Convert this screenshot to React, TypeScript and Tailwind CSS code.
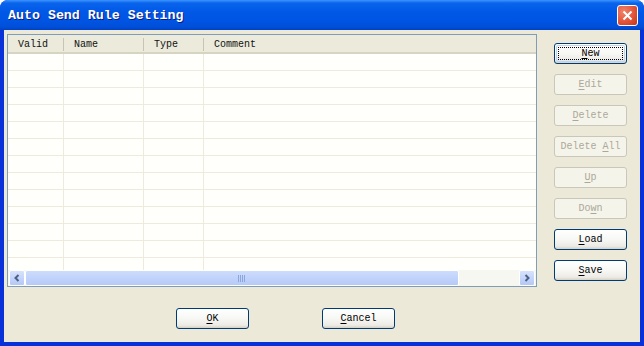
import type { ReactNode } from "react";

const mono = "font-['Liberation_Mono','DejaVu_Sans_Mono',monospace]";

function Btn({
  label,
  u,
  disabled = false,
  focused = false,
}: {
  label: string;
  u: number;
  disabled?: boolean;
  focused?: boolean;
}) {
  const text: ReactNode = (
    <>
      {label.slice(0, u)}
      <span className="underline underline-offset-2">{label[u]}</span>
      {label.slice(u + 1)}
    </>
  );
  return (
    <div
      className={[
        "relative flex h-[21px] w-[73px] items-center justify-center rounded-[3px] border text-[10px] leading-none",
        mono,
        disabled
          ? "border-[#c9c7ba] bg-[#f5f4ea] text-[#aca899]"
          : "border-[#003c74] bg-[linear-gradient(180deg,#ffffff_0%,#f7f7f4_50%,#ecebe6_85%,#d6d0c5_100%)] text-black",
      ].join(" ")}
    >
      {focused && (
        <span className="pointer-events-none absolute inset-[1px] rounded-[2px] border border-[#bcd4f6]">
          <span className="absolute inset-[1px] border border-dotted border-black" />
        </span>
      )}
      <span className="relative">{text}</span>
    </div>
  );
}

function ScrollArrow({ dir }: { dir: "left" | "right" }) {
  return (
    <div className="flex h-[16px] w-[16px] shrink-0 items-center justify-center rounded-[2px] border border-white bg-[linear-gradient(180deg,#d7e3fc_0%,#c1d3fb_60%,#b4c8f6_100%)]">
      <svg width="8" height="8" viewBox="0 0 8 8">
        <path
          d={dir === "left" ? "M5.5 1 L2.5 4 L5.5 7" : "M2.5 1 L5.5 4 L2.5 7"}
          fill="none"
          stroke="#4d6185"
          strokeWidth="2"
        />
      </svg>
    </div>
  );
}

const cols = [
  { name: "Valid", w: "w-[56px]" },
  { name: "Name", w: "w-[80px]" },
  { name: "Type", w: "w-[60px]" },
  { name: "Comment", w: "flex-1" },
];

export default function App() {
  const rows = Array.from({ length: 13 });
  return (
    <div className="flex h-[346px] w-[644px] flex-col overflow-hidden rounded-t-[8px] bg-[#0831d9]">
      {/* title bar */}
      <div className="flex h-[30px] shrink-0 items-center justify-between bg-[linear-gradient(180deg,#3d95ff_0%,#0a64ec_10%,#0058e6_40%,#0054e3_70%,#004fd8_90%,#0041c3_100%)] pl-[8px] pr-[6px]">
        <span
          className={`${mono} pt-[2px] text-[13.3px] font-bold text-white [text-shadow:1px_1px_0_#0a1e80]`}
        >
          Auto Send Rule Setting
        </span>
        <div className="flex h-[21px] w-[21px] items-center justify-center rounded-[3px] border border-white bg-[radial-gradient(circle_at_30%_30%,#f0836a_0%,#e2553a_55%,#c53418_100%)]">
          <svg width="11" height="11" viewBox="0 0 11 11">
            <path d="M1.5 1.5 L9.5 9.5 M9.5 1.5 L1.5 9.5" stroke="white" strokeWidth="2" />
          </svg>
        </div>
      </div>

      {/* client area */}
      <div className="mx-[4px] mb-[4px] flex flex-1 flex-col bg-[#ece9d8]">
        <div className="flex items-start">
          {/* list view */}
          <div className="ml-[3px] mt-[4px] flex h-[253px] w-[530px] flex-col border border-[#7f9db9] bg-[#fffffb]">
            <div className="flex h-[19px] shrink-0 border-b-[2px] border-[#d8d4c4] bg-[#ebeadb]">
              {cols.map((c, i) => (
                <div
                  key={c.name}
                  className={`${c.w} relative flex items-center pl-[10px] pt-[2px] text-[10px] text-[#111] ${mono}`}
                >
                  {c.name}
                  {i < 3 && (
                    <span className="absolute right-0 top-[3px] h-[13px] w-[1px] bg-[#c7c5b2]" />
                  )}
                </div>
              ))}
            </div>
            <div className="relative flex-1 overflow-hidden">
              {rows.map((_, r) => (
                <div key={r} className="flex h-[17px] border-b border-[#efebdc]">
                  <div className="w-[56px] border-r border-[#efebdc]" />
                  <div className="w-[80px] border-r border-[#efebdc]" />
                  <div className="w-[60px] border-r border-[#efebdc]" />
                  <div className="flex-1" />
                </div>
              ))}
            </div>
            {/* horizontal scrollbar */}
            <div className="flex h-[16px] shrink-0 items-center bg-[#f7f7f1] px-[1px]">
              <ScrollArrow dir="left" />
              <div className="flex h-[16px] w-[434px] items-center justify-center rounded-[2px] border border-white bg-[linear-gradient(180deg,#cddcfc_0%,#c1d3fb_50%,#b6caf7_100%)]">
                <svg width="8" height="7" viewBox="0 0 8 7">
                  {[0, 2, 4, 6].map((x) => (
                    <rect key={x} x={x} y="0" width="1" height="7" fill="#8da5dd" />
                  ))}
                </svg>
              </div>
              <div className="flex-1" />
              <ScrollArrow dir="right" />
            </div>
          </div>

          {/* side buttons */}
          <div className="ml-[17px] mt-[13px] flex flex-col gap-[10px]">
            <Btn label="New" u={0} focused />
            <Btn label="Edit" u={0} disabled />
            <Btn label="Delete" u={0} disabled />
            <Btn label="Delete All" u={7} disabled />
            <Btn label="Up" u={0} disabled />
            <Btn label="Down" u={2} disabled />
            <Btn label="Load" u={0} />
            <Btn label="Save" u={0} />
          </div>
        </div>

        {/* bottom buttons */}
        <div className="ml-[172px] mt-[21px] flex gap-[73px]">
          <Btn label="OK" u={0} />
          <Btn label="Cancel" u={0} />
        </div>
      </div>
    </div>
  );
}
